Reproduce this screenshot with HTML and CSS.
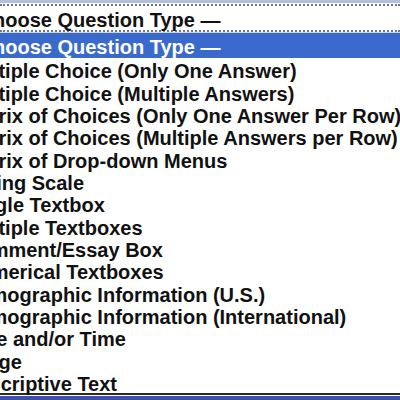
FILE: index.html
```html
<!DOCTYPE html>
<html lang="en">
<head>
    <meta charset="UTF-8">
    <title>Choose Question Type</title>
    <link rel="stylesheet" href="styles.css">
</head>
<body>

<div class="dropdown">
    <div class="select-box">
        <div class="focus-ring">
            <span class="item-text placeholder">— Choose Question Type —</span>
        </div>
    </div>
    <ul class="options">
        <li class="option selected"><span class="item-text placeholder">— Choose Question Type —</span></li>
        <li class="option"><span class="item-text">Multiple Choice (Only One Answer)</span></li>
        <li class="option"><span class="item-text">Multiple Choice (Multiple Answers)</span></li>
        <li class="option"><span class="item-text">Matrix of Choices (Only One Answer Per Row)</span></li>
        <li class="option"><span class="item-text">Matrix of Choices (Multiple Answers per Row)</span></li>
        <li class="option"><span class="item-text">Matrix of Drop-down Menus</span></li>
        <li class="option"><span class="item-text">Rating Scale</span></li>
        <li class="option"><span class="item-text">Single Textbox</span></li>
        <li class="option"><span class="item-text">Multiple Textboxes</span></li>
        <li class="option"><span class="item-text">Comment/Essay Box</span></li>
        <li class="option"><span class="item-text">Numerical Textboxes</span></li>
        <li class="option"><span class="item-text">Demographic Information (U.S.)</span></li>
        <li class="option"><span class="item-text">Demographic Information (International)</span></li>
        <li class="option"><span class="item-text">Date and/or Time</span></li>
        <li class="option"><span class="item-text">Image</span></li>
        <li class="option"><span class="item-text">Descriptive Text</span></li>
    </ul>
</div>

</body>
</html>
```

FILE: styles.css
```css
body {
    margin: 0;
    background-color: #ffffff;
    font-family: "Liberation Sans", Arial, sans-serif;
    font-weight: bold;
    font-size: 20px;
    color: #111111;
}
.dropdown {
    width: 400px;
    height: 400px;
    overflow: hidden;
    background-color: #ffffff;
}
.select-box {
    border-top: 3px solid #b3bfd8;
    padding-top: 1px;
}
.focus-ring {
    border-top: 2px dotted #6b7894;
    border-bottom: 2px dotted #6b7894;
    padding-top: 4px;
    line-height: 20px;
}
.options {
    list-style: none;
    margin: 0;
    padding: 0;
    border-top: 1px solid #c9d3ea;
    border-bottom: 2px solid #2a2a2a;
}
.option {
    box-sizing: border-box;
    height: 22.33px;
    padding-top: 4px;
    line-height: 18.33px;
    white-space: nowrap;
}
.option.selected {
    height: 25.33px;
    padding-top: 3px;
    line-height: 22.33px;
    background-color: #3a6bcc;
    color: #ffffff;
}
.item-text {
    display: block;
    margin-left: -36px;
    white-space: nowrap;
}
.item-text.placeholder {
    margin-left: -47px;
}
.dropdown::after {
    content: "";
    display: block;
    height: 4px;
    border-top: 1px solid #ffffff;
    background-color: #3d4fa8;
}
```
